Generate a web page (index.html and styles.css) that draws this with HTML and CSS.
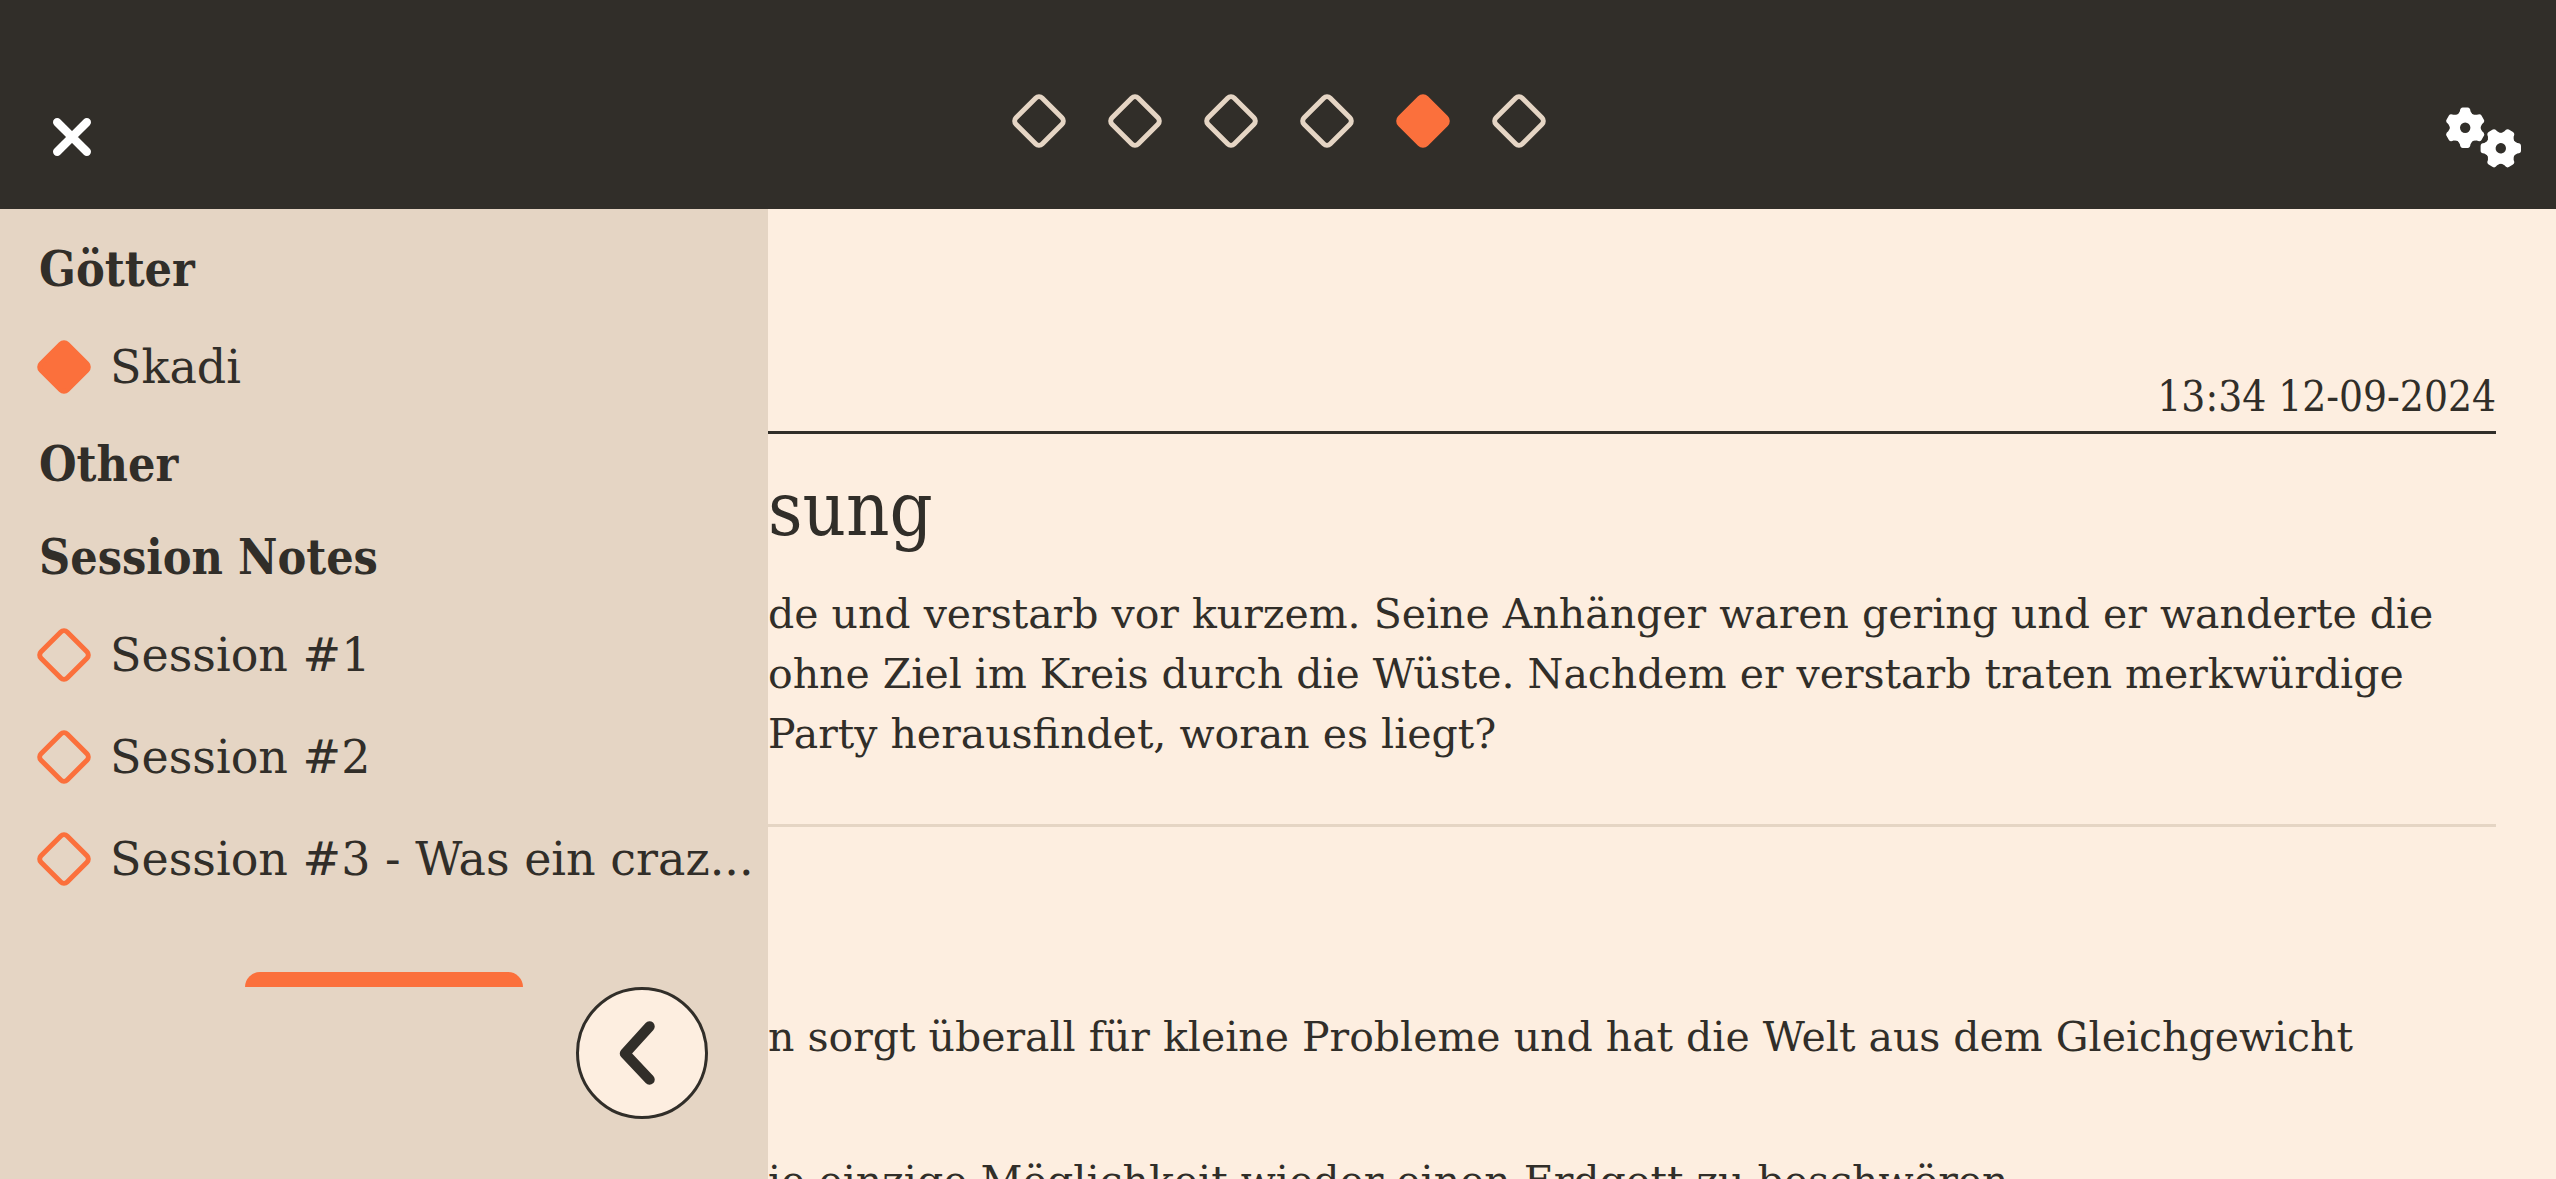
FILE: index.html
```html
<!DOCTYPE html>
<html lang="de">
<head>
<meta charset="utf-8">
<meta name="viewport" content="width=device-width, initial-scale=1">
<title>Skadi</title>
<link rel="stylesheet" href="styles.css">
</head>
<body>
<header class="topbar">
  <button class="icon-button" type="button" aria-label="Schließen">
    <svg width="40" height="40" viewBox="0 0 40 40"><path d="M5.2 5.2 34.8 34.8M34.8 5.2 5.2 34.8" fill="none" stroke="currentColor" stroke-width="8.4" stroke-linecap="round"/></svg>
  </button>
  <nav class="steps" aria-label="Seiten">
    <button class="step" type="button" aria-label="1"><span class="diamond"></span></button>
    <button class="step" type="button" aria-label="2"><span class="diamond"></span></button>
    <button class="step" type="button" aria-label="3"><span class="diamond"></span></button>
    <button class="step" type="button" aria-label="4"><span class="diamond"></span></button>
    <button class="step" type="button" aria-label="5" aria-current="page"><span class="diamond diamond-filled"></span></button>
    <button class="step" type="button" aria-label="6"><span class="diamond"></span></button>
  </nav>
  <button class="icon-button icon-button-end" type="button" aria-label="Einstellungen">
    <svg width="75" height="62" viewBox="0 0 75 62" fill="currentColor">
      <defs>
        <mask id="hole" maskUnits="userSpaceOnUse" x="-24" y="-24" width="48" height="48">
          <rect x="-24" y="-24" width="48" height="48" fill="#fff"/><circle r="5.2" fill="#000"/>
        </mask>
        <g id="gear" mask="url(#hole)">
          <circle r="15.4"/>
          <path id="teeth" d="M-5.3-16.5Q-5-20.2-2.4-20.2H2.4Q5-20.2 5.3-16.5L8-12V12L5.3 16.5Q5 20.2 2.4 20.2H-2.4Q-5 20.2-5.3 16.5L-8 12V-12Z"/>
          <use href="#teeth" transform="rotate(60)"/>
          <use href="#teeth" transform="rotate(120)"/>
        </g>
      </defs>
      <use href="#gear" transform="translate(19.2 21.7)"/>
      <use href="#gear" transform="translate(54.8 42.3) rotate(30)"/>
    </svg>
  </button>
</header>
<div class="layout">
  <aside class="sidebar">
    <div class="notes">
      <h2 class="group">Götter</h2>
      <a class="note" href="#skadi"><span class="diamond diamond-filled"></span><span class="note-name">Skadi</span></a>
      <h2 class="group">Other</h2>
      <h2 class="group">Session Notes</h2>
      <a class="note" href="#session-1"><span class="diamond"></span><span class="note-name">Session #1</span></a>
      <a class="note" href="#session-2"><span class="diamond"></span><span class="note-name">Session #2</span></a>
      <a class="note" href="#session-3"><span class="diamond"></span><span class="note-name">Session #3 - Was ein craz...</span></a>
      <button class="add" type="button" aria-label="Neue Notiz"></button>
    </div>
    <div class="sidebar-foot">
      <button class="collapse" type="button" aria-label="Einklappen">
        <svg width="40" height="66" viewBox="0 0 40 66"><path d="M31.500 6.500 7 33.500 31.500 59.500" fill="none" stroke="currentColor" stroke-width="10.500" stroke-linecap="round" stroke-linejoin="round"/></svg>
      </button>
    </div>
  </aside>
  <main class="article">
    <div class="meta"><time datetime="2024-09-12T13:34">13:34 12-09-2024</time></div>
    <h1 class="title">sung</h1>
    <p class="text">de und verstarb vor kurzem. Seine Anhänger waren gering und er wanderte die<br>ohne Ziel im Kreis durch die Wüste. Nachdem er verstarb traten merkwürdige<br>Party herausfindet, woran es liegt?</p>
    <hr class="divider">
    <p class="text">n sorgt überall für kleine Probleme und hat die Welt aus dem Gleichgewicht</p>
    <p class="text">ie einzige Möglichkeit wieder einen Erdgott zu beschwören.</p>
  </main>
</div>
</body>
</html>
```

FILE: styles.css
```css
:root {
  --ink: #312e29;
  --sand: #e5d5c4;
  --cream: #fdeee0;
  --orange: #fb703c;
  --serif: "DejaVu Serif", serif;
  --serif-condensed: "DejaVu Serif Condensed", "DejaVu Serif", serif;
}

* {
  box-sizing: border-box;
}

body {
  display: flex;
  flex-direction: column;
  height: 100vh;
  margin: 0;
  overflow: hidden;
  background: var(--cream);
  color: var(--ink);
  font-family: var(--serif);
  font-size: 41px;
  line-height: 60px;
}

button {
  padding: 0;
  border: 0;
  background: none;
  color: inherit;
  font: inherit;
}

svg {
  display: block;
}

.topbar {
  display: grid;
  grid-template-columns: 1fr auto 1fr;
  flex: none;
  align-items: center;
  height: 209px;
  padding: 64px 35px 0 52px;
  background: var(--ink);
  color: #fff;
}

.icon-button {
  justify-self: start;
}

.icon-button-end {
  justify-self: end;
}

.steps {
  display: flex;
  gap: 42px;
  padding: 0 16px 32px 0;
  color: var(--sand);
}

.step {
  display: grid;
  place-items: center;
  width: 54px;
  height: 54px;
}

.diamond {
  flex: none;
  width: 42px;
  height: 42px;
  border: 5px solid currentColor;
  border-radius: 7px;
  transform: rotate(45deg);
}

.diamond-filled {
  border-color: var(--orange);
  background: var(--orange);
}

.layout {
  display: grid;
  grid-template-columns: 768px 1fr;
  flex: 1;
  min-height: 0;
}

.sidebar {
  display: flex;
  flex-direction: column;
  min-height: 0;
  background: var(--sand);
  font-size: 46px;
}

.notes {
  display: flex;
  flex: 1;
  flex-direction: column;
  min-height: 0;
  padding: 14px 12px 0 39px;
  overflow: hidden;
}

.group {
  flex: none;
  margin: 0;
  font-family: var(--serif-condensed);
  font-size: 48px;
  font-weight: 700;
  line-height: 93px;
}

.note {
  display: flex;
  flex: none;
  gap: 25px;
  align-items: center;
  height: 102px;
  padding-left: 4px;
  color: var(--ink);
  text-decoration: none;
}

.note .diamond {
  border-width: 5px;
}

.note .diamond:not(.diamond-filled) {
  border-color: var(--orange);
}

.note-name {
  line-height: 72px;
  white-space: nowrap;
}

.add {
  flex: none;
  align-self: center;
  width: 278px;
  height: 96px;
  margin: 62px 27px 0 0;
  border-radius: 15px;
  background: var(--orange);
}

.sidebar-foot {
  display: flex;
  flex: none;
  justify-content: flex-end;
  padding: 0 60px 60px;
}

.collapse {
  display: grid;
  place-items: center;
  width: 132px;
  height: 132px;
  padding-right: 8px;
  border: 3px solid var(--ink);
  border-radius: 50%;
  background: var(--cream);
}

.article {
  min-width: 0;
  min-height: 0;
  padding-right: 60px;
  overflow: hidden;
  white-space: nowrap;
}

.meta {
  padding: 158px 0 4px;
  border-bottom: 3px solid var(--ink);
  font-family: var(--serif-condensed);
  font-size: 42px;
  text-align: right;
}

.title {
  margin: 21px 0;
  font-family: var(--serif-condensed);
  font-size: 75px;
  font-weight: 400;
  line-height: 108px;
}

.text {
  margin: 0 0 84px;
}

.divider {
  height: 3px;
  margin: -24px 0 180px;
  border: 0;
  background: var(--sand);
}
```
